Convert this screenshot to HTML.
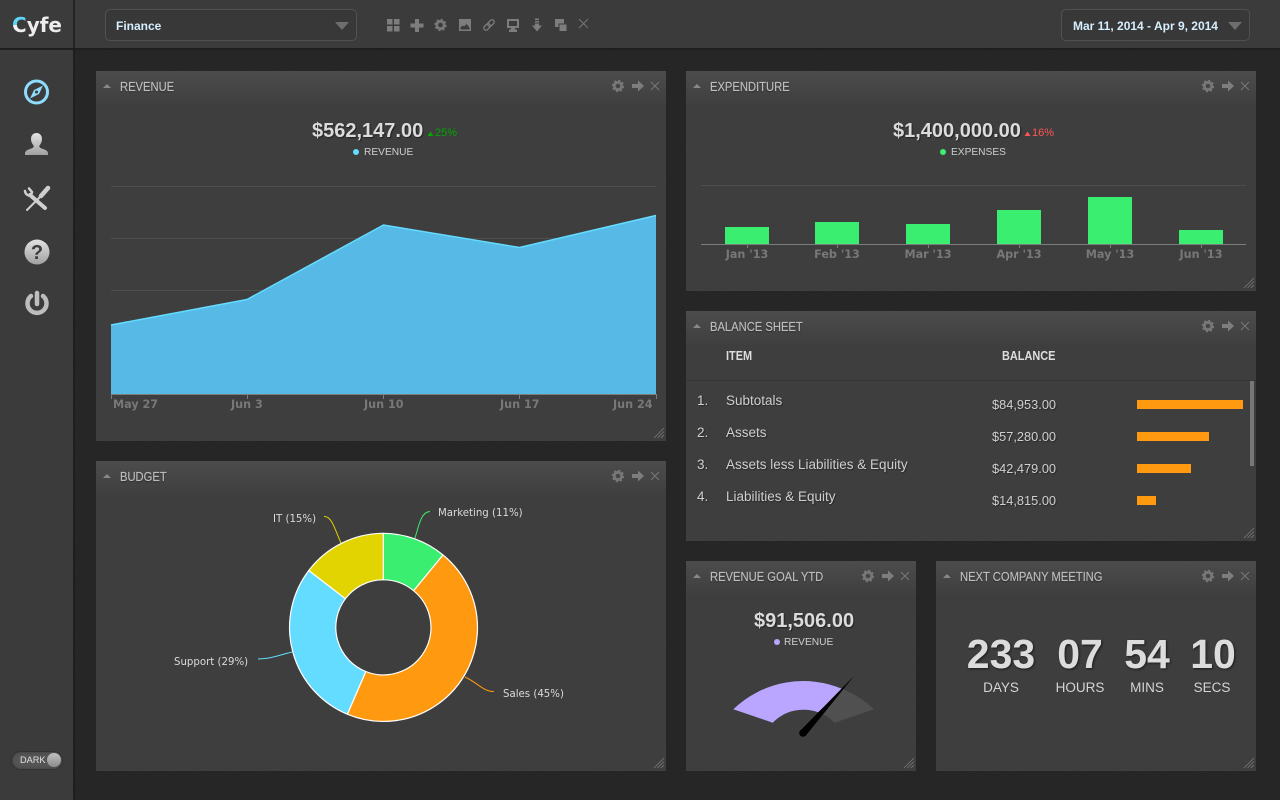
<!DOCTYPE html>
<html><head><meta charset="utf-8"><title>Cyfe</title>
<style>
*{box-sizing:border-box}
html,body{margin:0;padding:0;width:1280px;height:800px;overflow:hidden;background:#282828;font-family:"Liberation Sans",sans-serif}
#noise{position:absolute;left:0;top:0}
.top{position:absolute;left:0;top:0;width:1280px;height:50px;background:#3b3b3b;border-bottom:2px solid #1e1e1e}
.side{position:absolute;left:0;top:50px;width:75px;height:750px;background:#3b3b3b;border-right:2px solid #1e1e1e}
.vline{position:absolute;left:73px;top:0;width:2px;height:48px;background:#242424}
.logo{position:absolute;left:12px;top:11px;font:bold 20px/28px "DejaVu Sans",sans-serif;color:#ececec}
.logo span{background:linear-gradient(#5fd4f5 0,#5fd4f5 50%,#f0f0f0 50%);-webkit-background-clip:text;background-clip:text;color:transparent}
.sel{position:absolute;border:1px solid #515151;border-radius:5px;height:32px;background:#383838;color:#d6efff;font-weight:bold;font-size:12px;line-height:32px}
.car{position:absolute;width:0;height:0;border-left:7.5px solid transparent;border-right:7.5px solid transparent;border-top:8px solid #6e6e6e;top:12px}
.p{position:absolute;background:#3e3e3e}
.p .h{position:absolute;left:0;top:0;right:0;height:36px;background:linear-gradient(#4c4c4c,#3e3e3e)}
.p .t{position:absolute;left:24px;top:8px;font:12.8px/16px "Liberation Sans",sans-serif;color:#c0c0c0;-webkit-text-stroke:.2px #b0b0b0;text-transform:uppercase;white-space:nowrap;text-shadow:0 1px 1px #222;transform:scaleX(.875);transform-origin:0 0}
.p .a{position:absolute;left:7px;top:13px;width:0;height:0;border-left:4.5px solid transparent;border-right:4.5px solid transparent;border-bottom:4px solid #888}
.big{position:absolute;font:bold 20px/24px "Liberation Sans",sans-serif;color:#dcdcdc;white-space:nowrap;text-shadow:1px 1px 1px #222}
.lg{position:absolute;font:10.2px/12px "Liberation Sans",sans-serif;color:#cfcfcf;white-space:nowrap}
.dot{position:absolute;width:6px;height:6px;border-radius:50%}
.pc{position:absolute;font:11px/12px "Liberation Sans",sans-serif;white-space:nowrap}
.r{position:absolute;font:13.5px/16px "Liberation Sans",sans-serif;color:#cfcfcf;white-space:nowrap;text-shadow:1px 1px 1px #2a2a2a}
.m{font-size:12.8px}
.th{position:absolute;font:bold 13px/16px "Liberation Sans",sans-serif;color:#dedede;white-space:nowrap;transform:scaleX(.84);transform-origin:0 0}
.bar{position:absolute;left:1137px;height:9px;background:#ff9a10}
.n{position:absolute;width:90px;text-align:center;font:bold 41px/48px "Liberation Sans",sans-serif;color:#dcdcdc;text-shadow:1px 1px 2px #1c1c1c}
.u{position:absolute;width:80px;text-align:center;font:13.5px/16px "Liberation Sans",sans-serif;color:#d4d4d4}
svg.o{position:absolute;left:0;top:0}
.tog{position:absolute;left:12px;top:752px;width:50px;height:17px;border-radius:9px;background:#555;box-shadow:0 0 0 1px #333,inset 0 0 3px #3a3a3a;font:9.2px/17px "Liberation Sans",sans-serif;color:#e2e2e2;padding-left:8px}
.tog i{position:absolute;right:1px;top:1px;width:14px;height:14px;border-radius:50%;background:linear-gradient(#c0c0c0,#8c8c8c)}
</style></head><body>
<svg id="noise" width="1280" height="800"><filter id="nf"><feTurbulence type="fractalNoise" baseFrequency="1.1" numOctaves="2"/><feColorMatrix values="0 0 0 0 0 0 0 0 0 0 0 0 0 0 0 0 0 0 .55 -.1"/></filter><rect width="1280" height="800" fill="#2a2a2a"/><rect width="1280" height="800" filter="url(#nf)" opacity=".5"/></svg>

<div class="top"></div><div class="vline"></div><div class="side"></div>
<div class="logo"><span>C</span>yfe</div>
<div class="sel" style="left:105px;top:9px;width:252px;padding-left:10px">Finance<div class="car" style="right:7px"></div></div>
<div class="sel" style="left:1061px;top:9px;width:189px;padding-left:11px">Mar 11, 2014 - Apr 9, 2014<div class="car" style="right:7px"></div></div>

<div class="p" style="left:96px;top:71px;width:570px;height:370px"><div class="h"></div><div class="a"></div><div class="t">Revenue</div></div>
<div class="p" style="left:96px;top:461px;width:570px;height:310px"><div class="h"></div><div class="a"></div><div class="t">Budget</div></div>
<div class="p" style="left:686px;top:71px;width:570px;height:220px"><div class="h"></div><div class="a"></div><div class="t">Expenditure</div></div>
<div class="p" style="left:686px;top:311px;width:570px;height:230px"><div class="h"></div><div class="a"></div><div class="t">Balance Sheet</div></div>
<div class="p" style="left:686px;top:561px;width:230px;height:210px"><div class="h"></div><div class="a"></div><div class="t">Revenue Goal YTD</div></div>
<div class="p" style="left:936px;top:561px;width:320px;height:210px"><div class="h"></div><div class="a"></div><div class="t">Next Company Meeting</div></div>

<svg class="o" width="1280" height="800" viewBox="0 0 1280 800">
<defs>
<linearGradient id="g" x1="0" y1="0" x2="0" y2="1"><stop offset="0" stop-color="#e2e2e2"/><stop offset="1" stop-color="#a0a0a0"/></linearGradient>
<g id="gear"><circle r="3.7" fill="none" stroke="#777" stroke-width="2.8"/><circle r="5.3" fill="none" stroke="#777" stroke-width="1.8" stroke-dasharray="2.1 2.06"/></g>
<g id="arr"><path d="M-6-2H0V-5.5L6 0 0 5.5V2H-6Z" fill="#7d7d7d"/></g>
<g id="xx"><path d="M-4-4 4 4M4-4-4 4" stroke="#777" stroke-width="1" fill="none"/></g>
<g id="ctl"><use href="#gear" x="-48"/><use href="#arr" x="-28"/><use href="#xx" x="-11"/></g>
<g id="rs"><path d="M-10 0 0-10M-6.500 0 0-6.500M-3 0 0-3" stroke="#7a7a7a" stroke-width=".8" fill="none"/></g>
</defs>

<!-- panel controls -->
<use href="#ctl" x="666" y="86"/><use href="#ctl" x="666" y="476"/><use href="#ctl" x="1256" y="86"/><use href="#ctl" x="1256" y="326"/><use href="#ctl" x="916" y="576"/><use href="#ctl" x="1256" y="576"/>
<use href="#rs" x="664" y="438"/><use href="#rs" x="664" y="768"/><use href="#rs" x="1254" y="288"/><use href="#rs" x="1254" y="538"/><use href="#rs" x="914" y="768"/><use href="#rs" x="1254" y="768"/>

<!-- toolbar icons -->
<g fill="#7d7d7d">
<rect x="387" y="19" width="5.5" height="5.5"/><rect x="394" y="19" width="5.5" height="5.5"/><rect x="387" y="26" width="5.5" height="5.5"/><rect x="394" y="26" width="5.5" height="5.5"/>
<path d="M415 19h4v4.500h4.500v4H419V32h-4v-4.500h-4.500v-4h4.500Z"/>
<path d="M459 19h12v12h-12Zm1.500 1.500v9h9v-2l-3-3.500-2.500 2.500-1.500-1-2 2Z" fill-rule="evenodd"/><circle cx="463" cy="22.500" r="1.300"/>
<path d="M507 19h12v9h-12Zm2 2v5h8v-5ZM511 28h4v1.500h2V32h-8v-2.500h2Z" fill-rule="evenodd"/>
<path d="M535 18.500h4v1.500h-4Zm0 2.500h4v1.500h-4Zm0 2.500h4v2h3l-5 6-5-6h3Z"/>
<rect x="555" y="19" width="9" height="8"/><rect x="559" y="24" width="8" height="7.500" stroke="#3b3b3b" stroke-width="1"/>
</g>
<use href="#gear" x="440.500" y="25"/>
<g transform="rotate(-45 489 25)" fill="none" stroke="#7d7d7d" stroke-width="1.300"><rect x="482.500" y="22.800" width="7.500" height="4.400" rx="2.200"/><rect x="488" y="22.800" width="7.500" height="4.400" rx="2.200"/></g>
<path d="M579 19l9 9M588 19l-9 9" stroke="#777" stroke-width="1"/>

<!-- sidebar icons -->
<circle cx="36.500" cy="92" r="11" fill="none" stroke="#8fdcff" stroke-width="3"/>
<path d="M43 85.500 39 94 30 98.500 34 90Z" fill="#8fdcff"/><circle cx="36.500" cy="92" r="1.500" fill="#3b3b3b"/>
<path d="M25 155v-1.500c0-2.500 2-3.500 5-4.500l2.500-1c1-.5 1.500-1.500 1-2.500-1.500-2-2.500-4-2.500-6.500 0-3.500 2-6 5.500-6s5.500 2.500 5.500 6c0 2.500-1 4.500-2.500 6.500-.5 1 0 2 1 2.500l2.500 1c3 1 5 2 5 4.500v1.500Z" fill="url(#g)"/>
<g stroke="#cfcfcf" fill="none" stroke-linecap="round">
<path d="M30 195 45 208" stroke-width="4"/><path d="M25 191c.5 3 2.500 5 6 4.500l1-3.500-3-3.500" stroke-width="2.500"/>
<path d="M48 188 41 196" stroke-width="4.500"/><path d="M41 196 27 210" stroke-width="2"/>
</g>
<circle cx="37" cy="252" r="12.500" fill="url(#g)"/>
<text x="37" y="259" text-anchor="middle" font-family="Liberation Sans" font-weight="bold" font-size="20" fill="#3b3b3b">?</text>
<path d="M31 296a9.500 9.500 0 1 0 12 0" fill="none" stroke="#bdbdbd" stroke-width="4.500" stroke-linecap="round"/>
<path d="M37 293v11" stroke="#bdbdbd" stroke-width="4.500" stroke-linecap="round"/>

<!-- revenue chart -->
<g stroke="#4e4e4e"><path d="M111 186.500H656M111 238.500H656M111 290.500H656"/></g>
<path d="M111 325 247 299.500 383.500 225 519.500 247.500 656 215.500V394H111Z" fill="#57b9e6"/>
<path d="M111 325 247 299.500 383.500 225 519.500 247.500 656 215.500" fill="none" stroke="#63dcff" stroke-width="1.500"/>
<path d="M111 394.500H656M111.500 394v5M247.500 394v5M383.500 394v5M519.500 394v5M656.500 394v5" stroke="#7c7c7c" fill="none"/>
<g font-family="DejaVu Sans" font-weight="bold" font-size="11.200" fill="#787878">
<text x="113" y="408">May 27</text><text x="231" y="408">Jun 3</text><text x="364" y="408">Jun 10</text><text x="500" y="408">Jun 17</text><text x="613" y="408">Jun 24</text>
<text x="747" y="258" text-anchor="middle">Jan '13</text><text x="837" y="258" text-anchor="middle">Feb '13</text><text x="928" y="258" text-anchor="middle">Mar '13</text><text x="1019" y="258" text-anchor="middle">Apr '13</text><text x="1110" y="258" text-anchor="middle">May '13</text><text x="1201" y="258" text-anchor="middle">Jun '13</text>
</g>

<!-- expenditure chart -->
<path d="M701 185.500H1246" stroke="#4e4e4e"/>
<g fill="#3aef70"><rect x="725" y="227" width="44" height="17"/><rect x="815" y="222" width="44" height="22"/><rect x="906" y="224" width="44" height="20"/><rect x="997" y="210" width="44" height="34"/><rect x="1088" y="197" width="44" height="47"/><rect x="1179" y="230" width="44" height="14"/></g>
<path d="M701 244.500H1246M747.500 244v4M837.500 244v4M928.500 244v4M1019.500 244v4M1110.500 244v4M1201.500 244v4" stroke="#7c7c7c" fill="none"/>

<!-- donut -->
<g stroke="#fff" stroke-width="1.200" stroke-linejoin="round">
<path d="M383.300 533.300A94 94 0 0 1 443 555L413.600 590.700A47.500 47.500 0 0 0 383.300 579.800Z" fill="#3aef70"/>
<path d="M443 555A94 94 0 0 1 477.500 627.300A94 94 0 0 1 347.300 714.200L365.800 671.500A47.500 47.500 0 0 0 413.600 590.700Z" fill="#ff9a10"/>
<path d="M347.300 714.200A94 94 0 0 1 308.800 570.500L345.400 598.700A47.500 47.500 0 0 0 365.800 671.500Z" fill="#63dcff"/>
<path d="M308.800 570.500A94 94 0 0 1 383.300 533.300V579.800A47.500 47.500 0 0 0 345.400 598.700Z" fill="#e2d400"/>
</g>
<g fill="none" stroke-width="1">
<path d="M415 538C419 525 421 512 430 511.500" stroke="#3aef70"/>
<path d="M341 543C335 530 332 516 324 516.500" stroke="#e2d400"/>
<path d="M292 652C280 655 270 659 258 659" stroke="#63dcff"/>
<path d="M465 677C478 683 484 692 494 691.500" stroke="#ff9a10"/>
</g>
<g font-family="DejaVu Sans" font-size="10.200" fill="#dadada">
<text x="438" y="516">Marketing (11%)</text><text x="273" y="522">IT (15%)</text><text x="174" y="665">Support (29%)</text><text x="503" y="697">Sales (45%)</text>
</g>

<!-- gauge -->
<path d="M843.500 689.400A100.700 100.700 0 0 1 874 709.300L834.500 722.700A42.600 42.600 0 0 0 818 712.300Z" fill="#505050"/>
<path d="M733.300 709.300A100.700 100.700 0 0 1 843.500 689.400L818 712.300A42.600 42.600 0 0 0 772.700 722.700Z" fill="#bba6ff"/>
<path d="M854 676 805.500 736 800 731Z" fill="#000"/><circle cx="803" cy="733" r="3.800" fill="#000"/>

<!-- triangles -->
<path d="M427.500 136l3-4.500 3 4.500Z" fill="#00a800"/>
<path d="M1024.500 136l3-4.500 3 4.500Z" fill="#ff5555"/>
<path d="M686 380.500H1256" stroke="#353535"/>
<rect x="1250" y="381" width="4" height="85" fill="#777"/>
</svg>

<div class="big" style="left:312px;top:119px">$562,147.00</div>
<div class="pc" style="left:435px;top:127px;color:#00a800">25%</div>
<div class="dot" style="left:353px;top:149px;background:#63dcff"></div>
<div class="lg" style="left:364px;top:147px">REVENUE</div>

<div class="big" style="left:893px;top:119px">$1,400,000.00</div>
<div class="pc" style="left:1032px;top:127px;color:#ff5555">16%</div>
<div class="dot" style="left:940px;top:149px;background:#3aef70"></div>
<div class="lg" style="left:951px;top:147px">EXPENSES</div>

<div class="big" style="left:754px;top:609px">$91,506.00</div>
<div class="dot" style="left:774px;top:639px;background:#bba6ff"></div>
<div class="lg" style="left:784px;top:637px">REVENUE</div>

<div class="th" style="left:726px;top:348px">ITEM</div>
<div class="th" style="left:1002px;top:348px">BALANCE</div>
<div class="r" style="left:697px;top:393px">1.</div><div class="r" style="left:726px;top:393px">Subtotals</div><div class="r m" style="left:992px;top:397px">$84,953.00</div><div class="bar" style="top:400px;width:106px"></div>
<div class="r" style="left:697px;top:425px">2.</div><div class="r" style="left:726px;top:425px">Assets</div><div class="r m" style="left:992px;top:429px">$57,280.00</div><div class="bar" style="top:432px;width:72px"></div>
<div class="r" style="left:697px;top:457px">3.</div><div class="r" style="left:726px;top:457px">Assets less Liabilities &amp; Equity</div><div class="r m" style="left:992px;top:461px">$42,479.00</div><div class="bar" style="top:464px;width:54px"></div>
<div class="r" style="left:697px;top:489px">4.</div><div class="r" style="left:726px;top:489px">Liabilities &amp; Equity</div><div class="r m" style="left:992px;top:493px">$14,815.00</div><div class="bar" style="top:496px;width:19px"></div>

<div class="n" style="left:956px;top:630px">233</div><div class="n" style="left:1035px;top:630px">07</div><div class="n" style="left:1102px;top:630px">54</div><div class="n" style="left:1168px;top:630px">10</div>
<div class="u" style="left:961px;top:680px">DAYS</div><div class="u" style="left:1040px;top:680px">HOURS</div><div class="u" style="left:1107px;top:680px">MINS</div><div class="u" style="left:1172px;top:680px">SECS</div>

<div class="tog">DARK<i></i></div>
</body></html>
